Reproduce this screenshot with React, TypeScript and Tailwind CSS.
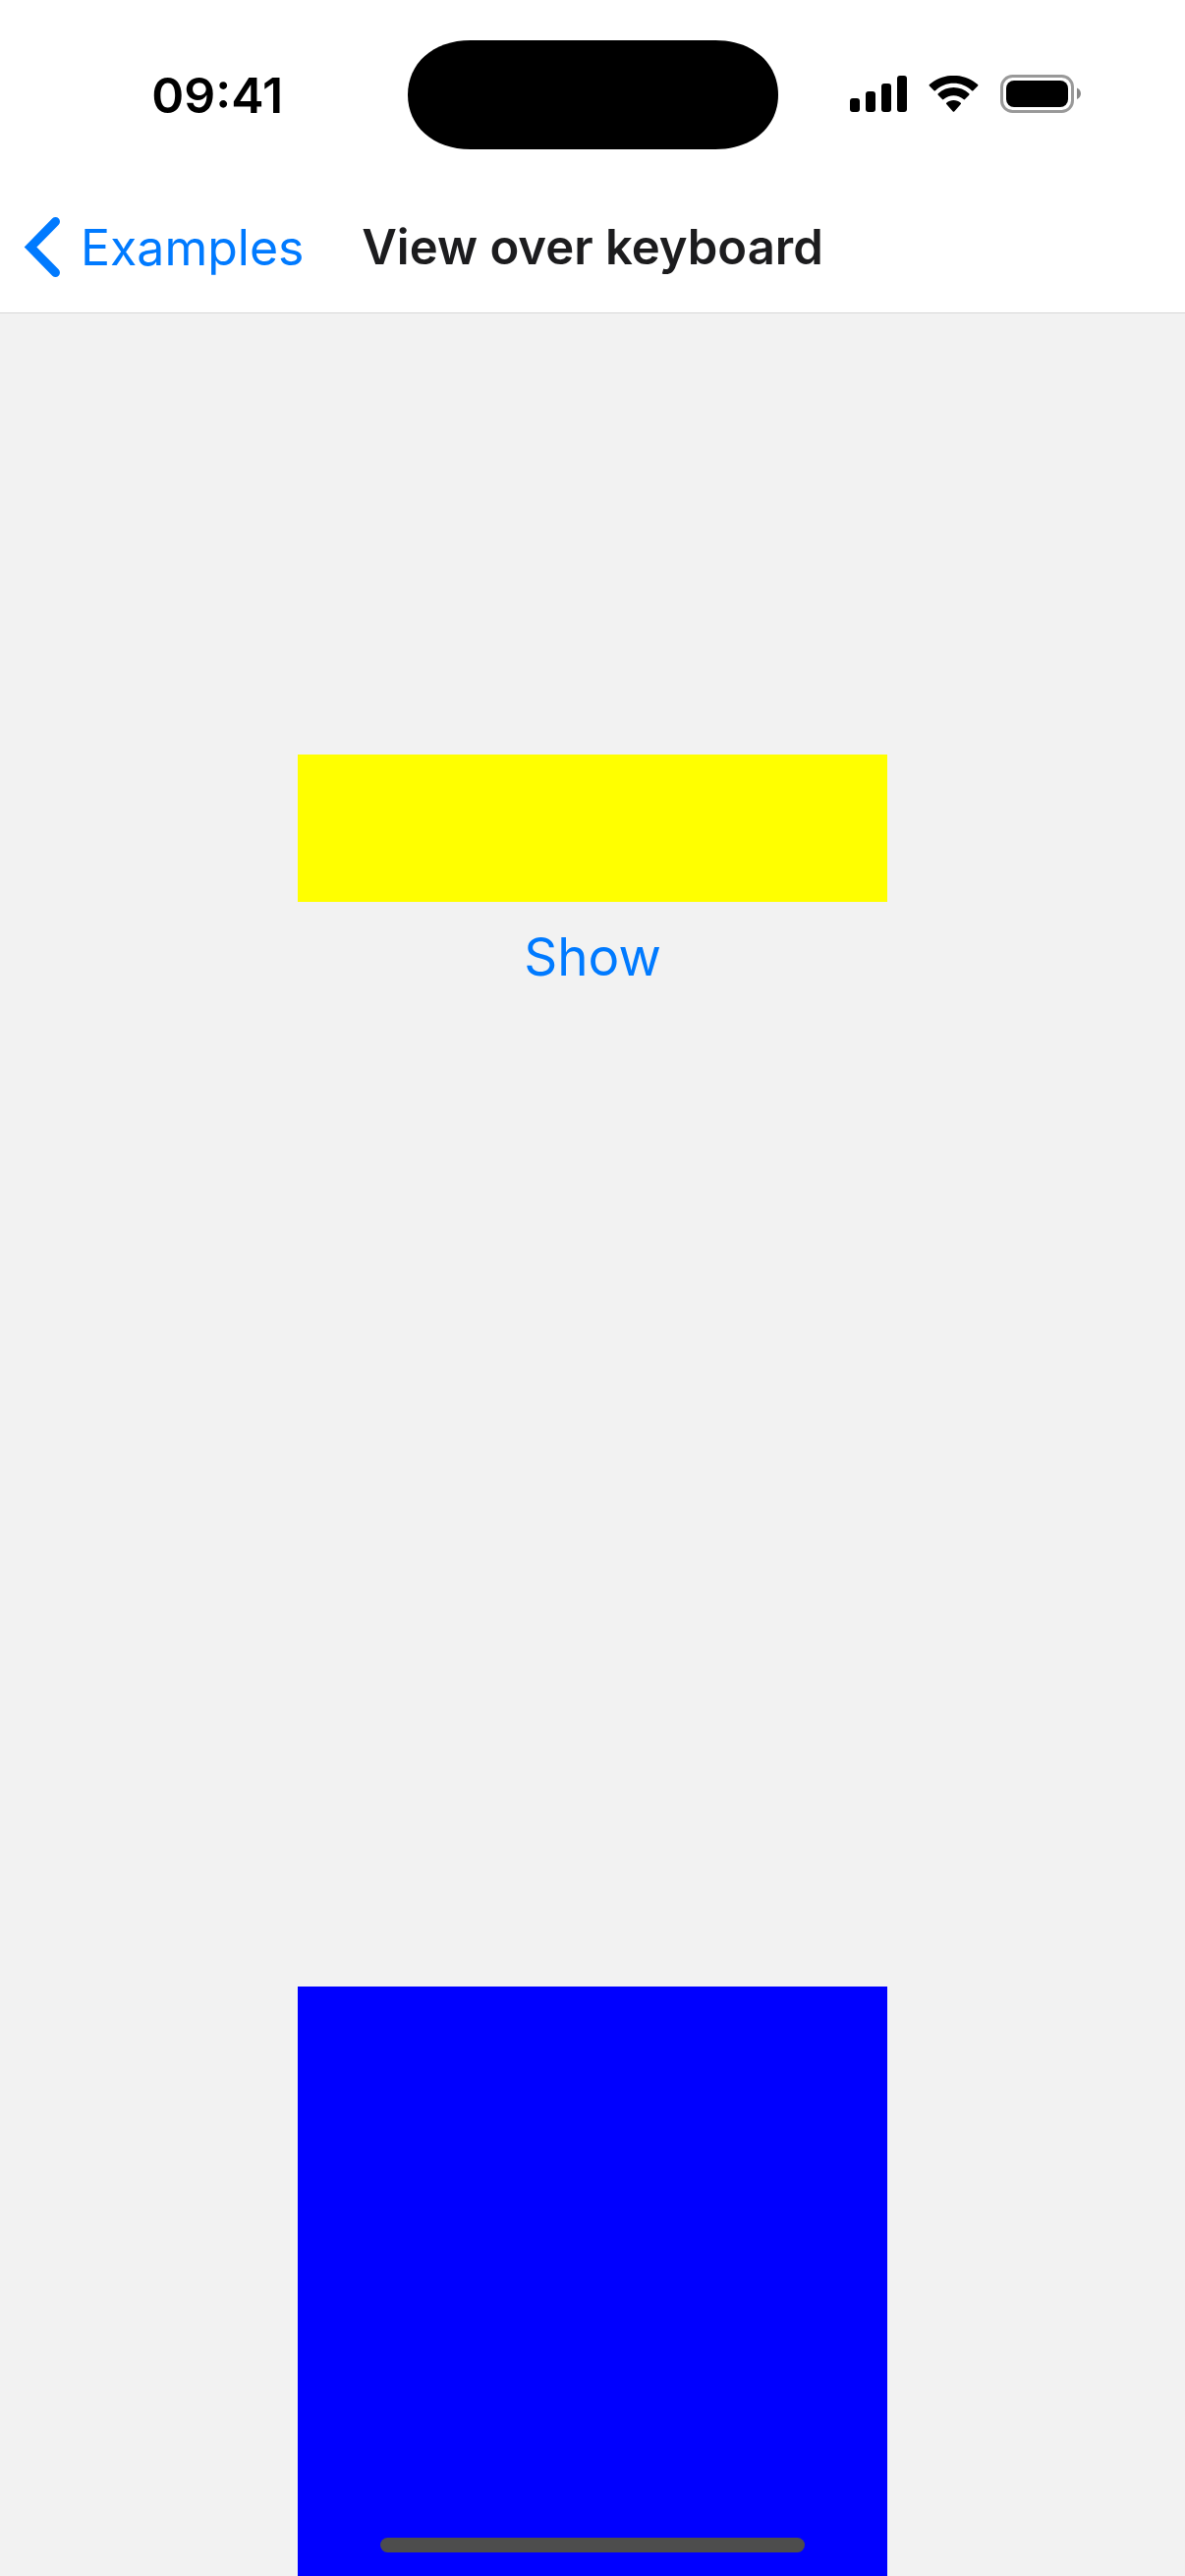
function SignalIcon() {
  return (
    <svg className="h-[37px] w-[58px]" viewBox="0 0 58 37" fill="currentColor" aria-hidden="true">
      <rect x="0" y="23" width="10" height="14" rx="3" />
      <rect x="16" y="16" width="10" height="21" rx="3" />
      <rect x="32" y="8" width="10" height="29" rx="3" />
      <rect x="48" y="0" width="10" height="37" rx="3" />
    </svg>
  );
}

function WifiIcon() {
  return (
    <svg className="h-[37px] w-[51px]" viewBox="0 0 51 37" fill="currentColor" aria-hidden="true">
      <path d="M25.5 7.8C32.4 7.8 39 10.4 44 15.2C44.4 15.6 45 15.6 45.4 15.2L50.1 10.6C50.5 10.2 50.5 9.5 50.1 9.1C36.4 -3.2 14.6 -3.2 0.9 9.1C0.5 9.5 0.5 10.2 0.9 10.6L5.6 15.2C6 15.6 6.6 15.6 7 15.2C12 10.4 18.6 7.8 25.5 7.8Z" />
      <path d="M25.5 20.2C29.2 20.2 32.8 21.6 35.6 24.1C36 24.5 36.6 24.5 37 24.1L41.3 19.7C41.7 19.3 41.7 18.6 41.3 18.2C32.4 9.8 18.6 9.8 9.7 18.2C9.3 18.6 9.3 19.3 9.7 19.7L14 24.1C14.4 24.5 15 24.5 15.4 24.1C18.2 21.6 21.8 20.2 25.5 20.2Z" />
      <path d="M32.8 29.1C33.2 28.7 33.2 28.1 32.8 27.7C28.6 24.1 22.4 24.1 18.2 27.7C17.8 28.1 17.8 28.7 18.2 29.1L24.8 36.4C25.2 36.8 25.8 36.8 26.2 36.4Z" />
    </svg>
  );
}

function BatteryIcon() {
  return (
    <svg className="h-[39px] w-[82px]" viewBox="0 0 82 39" fill="none" aria-hidden="true">
      <rect x="1.5" y="1.5" width="72" height="36" rx="11" stroke="#999999" strokeWidth="3" />
      <rect x="6" y="6" width="63" height="27" rx="8" fill="currentColor" />
      <path d="M78 13.5C80.5 14.5 82 16.7 82 19.3C82 21.9 80.5 24.1 78 25.1Z" fill="#888888" />
    </svg>
  );
}

function Island() {
  return (
    <svg className="h-[111px] w-[377px]" viewBox="0 0 377 111" aria-hidden="true">
      <path d="M64 0H313C352 0 377 24 377 55.5C377 87 352 111 313 111H64C25 111 0 87 0 55.5C0 24 25 0 64 0Z" />
    </svg>
  );
}

function StatusBar() {
  return (
    <div className="grid h-[177px] grid-cols-[1fr_auto_1fr] items-center bg-white pt-4 text-black">
      <time className="pl-7 text-center text-[50px] font-semibold leading-none">09:41</time>
      <Island />
      <div className="flex items-center justify-center gap-[22px] pb-0.5 pr-8">
        <SignalIcon />
        <WifiIcon />
        <BatteryIcon />
      </div>
    </div>
  );
}

function NavBar() {
  return (
    <header className="grid h-[142px] grid-cols-[1fr_auto_1fr] items-center border-b border-[#d8d8d8] bg-white pt-2">
      <a href="#examples" className="flex items-center gap-5 pl-6 text-[50px] leading-none text-[#007aff]">
        <svg className="h-[62px] w-[38px]" viewBox="0 0 38 62" fill="none" aria-hidden="true">
          <path d="M32.5 4.5L7 30.5L32.5 56.5" stroke="currentColor" strokeWidth="9" strokeLinecap="round" strokeMiterlimit="10" />
        </svg>
        Examples
      </a>
      <h1 className="text-[49px] font-semibold leading-none text-[#1c1c1e]">View over keyboard</h1>
    </header>
  );
}

export default function App() {
  return (
    <div className="flex min-h-screen flex-col bg-[#f2f2f2] font-['Inter',sans-serif]">
      <StatusBar />
      <NavBar />
      <main className="flex flex-1 flex-col items-center pt-[449px]">
        <div className="h-[150px] w-[600px] bg-[#ffff00]" />
        <button type="button" className="px-6 py-[30px] text-[53px] leading-none text-[#007aff]">
          Show
        </button>
        <div className="mt-auto flex h-[600px] w-[600px] flex-col items-center justify-end bg-[#0000ff] pb-6">
          <div className="h-[15px] w-[432px] rounded-full bg-[#4d4d4d]" />
        </div>
      </main>
    </div>
  );
}
